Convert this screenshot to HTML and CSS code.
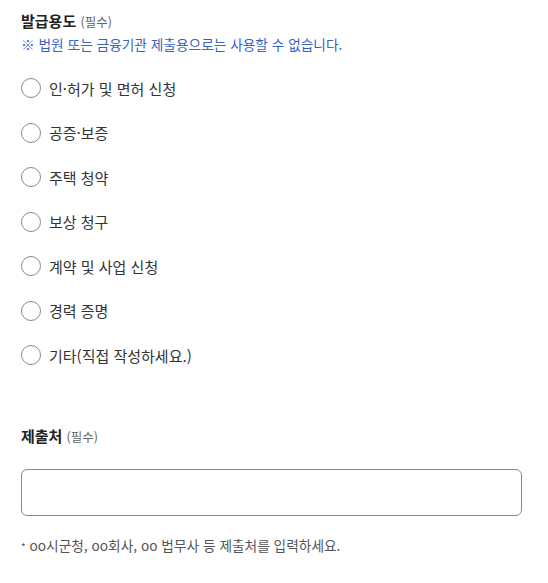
FILE: index.html
```html
<!DOCTYPE html>
<html lang="ko">
<head>
<meta charset="utf-8">
<link rel="stylesheet" href="styles.css">
</head>
<body>
<div class="form">
  <div class="field-title"><strong>발급용도</strong> <span class="req">(필수)</span></div>
  <div class="notice">※ 법원 또는 금융기관 제출용으로는 사용할 수 없습니다.</div>
  <ul class="options">
    <li class="option"><span class="radio"></span><span class="label">인·허가 및 면허 신청</span></li>
    <li class="option"><span class="radio"></span><span class="label">공증·보증</span></li>
    <li class="option"><span class="radio"></span><span class="label">주택 청약</span></li>
    <li class="option"><span class="radio"></span><span class="label">보상 청구</span></li>
    <li class="option"><span class="radio"></span><span class="label">계약 및 사업 신청</span></li>
    <li class="option"><span class="radio"></span><span class="label">경력 증명</span></li>
    <li class="option"><span class="radio"></span><span class="label">기타(직접 작성하세요.)</span></li>
  </ul>
  <div class="field-title second"><strong>제출처</strong> <span class="req">(필수)</span></div>
  <div class="input-box"></div>
  <div class="hint"><span class="dot">*</span> oo시군청, oo회사, oo 법무사 등 제출처를 입력하세요.</div>
</div>
</body>
</html>
```

FILE: styles.css
```css
html, body {
  margin: 0;
  padding: 0;
  background: #ffffff;
}
body {
  font-family: "Noto Sans CJK KR", "Noto Sans", sans-serif;
  color: #333333;
}
.form {
  padding: 11px 26px 0 21px;
}
.field-title {
  line-height: 20px;
  font-size: 15px;
  color: #222222;
}
.field-title strong {
  font-weight: 700;
  font-size: 15px;
}
.field-title.second {
  margin-top: 48px;
}
.req {
  font-size: 12.5px;
  color: #666666;
}
.notice {
  margin-top: 2px;
  line-height: 20px;
  font-size: 13.7px;
  color: #3a62c4;
}
.options {
  list-style: none;
  margin: 12px 0 0 0;
  padding: 0;
}
.option {
  height: 44.5px;
  display: flex;
  align-items: center;
  gap: 8px;
}
.radio {
  width: 20px;
  height: 20px;
  border: 1px solid #8c8c8c;
  border-radius: 50%;
  box-sizing: border-box;
  flex: none;
}
.label {
  font-size: 15px;
  color: #333333;
}
.input-box {
  margin-top: 22px;
  height: 47px;
  border: 1px solid #8a8a8a;
  border-radius: 6px;
  box-sizing: border-box;
}
.hint {
  margin-top: 19px;
  line-height: 20px;
  font-size: 13.7px;
  color: #555555;
}
.dot {
  font-size: 10px;
}
```
